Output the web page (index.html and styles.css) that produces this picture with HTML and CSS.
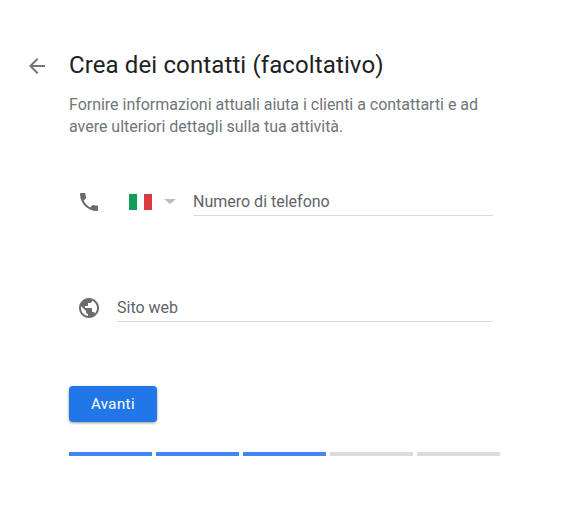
FILE: index.html
```html
<!DOCTYPE html>
<html lang="it">
<head>
  <meta charset="UTF-8" />
  <title>Crea dei contatti</title>
  <link rel="stylesheet" href="styles.css">
</head>
<body>
  <div class="page">
    <div class="back">
      <svg class="icon-back" viewBox="0 0 24 24" width="24" height="24"><path d="M20 11H7.83l5.59-5.59L12 4l-8 8 8 8 1.41-1.41L7.83 13H20v-2z"/></svg>
    </div>
    <div class="content">
      <h1 class="title">Crea dei contatti (facoltativo)</h1>
      <p class="intro">Fornire informazioni attuali aiuta i clienti a contattarti e ad avere ulteriori dettagli sulla tua attività.</p>

      <div class="row row-phone">
        <svg class="icon" viewBox="0 0 24 24" width="24" height="24"><path d="M6.62 10.79c1.44 2.83 3.76 5.14 6.59 6.59l2.2-2.2c.27-.27.67-.36 1.02-.24 1.12.37 2.33.57 3.57.57.55 0 1 .45 1 1V20c0 .55-.45 1-1 1-9.39 0-17-7.61-17-17 0-.55.45-1 1-1h3.5c.55 0 1 .45 1 1 0 1.25.2 2.45.57 3.57.11.35.03.74-.25 1.02l-2.2 2.2z"/></svg>
        <div class="flag"><span class="green"></span><span class="white"></span><span class="red"></span></div>
        <span class="caret"></span>
        <div class="field field-phone">Numero di telefono</div>
      </div>

      <div class="row row-web">
        <svg class="icon" viewBox="0 0 24 24" width="24" height="24"><path d="M12 2C6.48 2 2 6.48 2 12s4.48 10 10 10 10-4.48 10-10S17.52 2 12 2zm-1 17.93c-3.95-.49-7-3.85-7-7.93 0-.62.08-1.21.21-1.79L9 15v1c0 1.1.9 2 2 2v1.93zm6.9-2.54c-.26-.81-1-1.39-1.9-1.39h-1v-3c0-.55-.45-1-1-1H8v-2h2c.55 0 1-.45 1-1V7h2c1.1 0 2-.9 2-2v-.41c2.93 1.19 5 4.06 5 7.41 0 2.08-.8 3.97-2.1 5.39z"/></svg>
        <div class="field field-web">Sito web</div>
      </div>

      <button class="next">Avanti</button>

      <div class="steps">
        <span class="step done"></span>
        <span class="step done"></span>
        <span class="step done"></span>
        <span class="step"></span>
        <span class="step"></span>
      </div>
    </div>
  </div>
</body>
</html>
```

FILE: styles.css
```css
body {
  margin: 0;
  background: #fff;
  font-family: Roboto, "Liberation Sans", sans-serif;
}

.page {
  display: flex;
  padding: 52px 0 0 25px;
}

.back {
  width: 44px;
  height: 28px;
  display: flex;
  align-items: center;
}

.icon-back {
  fill: #757575;
}

.content {
  width: 431px;
}

.title {
  margin: 0;
  font-size: 24px;
  line-height: 27px;
  font-weight: 400;
  letter-spacing: 0.12px;
  color: #202124;
}

.intro {
  margin: 15px 0 0;
  font-size: 16px;
  line-height: 22px;
  color: #70757a;
  letter-spacing: -0.02px;
}

.row {
  display: flex;
  align-items: center;
  width: 424px;
}

.row-phone {
  margin-top: 49px;
}

.row-web {
  margin-top: 77px;
}

.icon {
  fill: #6b6b6b;
  flex: none;
  margin-left: 8px;
}

.flag {
  display: flex;
  margin-left: 28px;
  width: 23px;
  height: 16px;
}

.flag span {
  flex: 1;
}

.green {
  background: #0f9d58;
}

.white {
  background: #fff;
}

.red {
  background: #db3a3e;
}

.caret {
  margin-left: 12px;
  border-top: 5px solid #bdbdbd;
  border-left: 6px solid transparent;
  border-right: 6px solid transparent;
}

.field {
  flex: 1;
  font-size: 16px;
  line-height: 29px;
  color: #5f6368;
  border-bottom: 1px solid #dadce0;
  box-sizing: border-box;
  height: 29px;
}

.field-phone {
  margin-left: 17px;
}

.field-web {
  margin-left: 16px;
}

.next {
  display: block;
  margin-top: 64px;
  width: 88px;
  height: 36px;
  border: none;
  border-radius: 4px;
  background: #2277e8;
  color: #fff;
  font-family: inherit;
  font-size: 15px;
  font-weight: 400;
  letter-spacing: 0.4px;
  box-shadow: 0 1px 3px rgba(0,0,0,0.4);
}

.steps {
  display: flex;
  gap: 4px;
  margin-top: 30px;
}

.step {
  width: 83px;
  height: 4px;
  background: #dadce0;
}

.step.done {
  background: #4285f4;
}
```
